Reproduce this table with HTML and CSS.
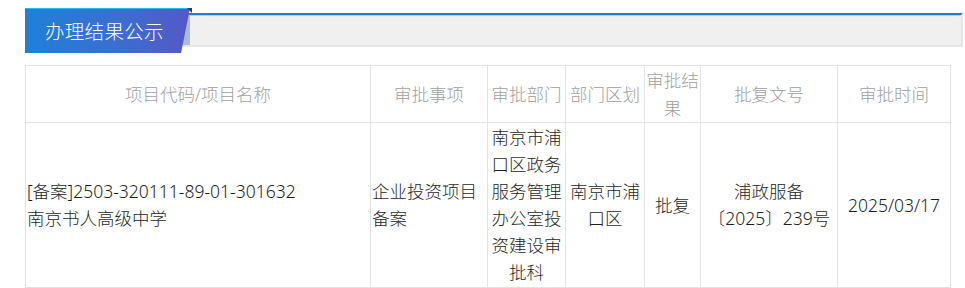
FILE: index.html
```html
<!DOCTYPE html>
<html lang="zh-CN">
<head>
<meta charset="utf-8">
<title>办理结果公示</title>
<link rel="stylesheet" href="styles.css">
</head>
<body>
<div class="page">
  <div class="title-row">
    <div class="tab"><span class="tab-text">办理结果公示</span></div>
    <div class="fold"></div>
    <div class="bar"></div>
  </div>
  <table class="result">
    <colgroup>
      <col class="c1"><col class="c2"><col class="c3"><col class="c4"><col class="c5"><col class="c6"><col class="c7">
    </colgroup>
    <thead>
      <tr>
        <th>项目代码/项目名称</th>
        <th>审批事项</th>
        <th>审批部门</th>
        <th>部门区划</th>
        <th>审批结果</th>
        <th>批复文号</th>
        <th>审批时间</th>
      </tr>
    </thead>
    <tbody>
      <tr>
        <td class="left">[备案]2503-320111-89-01-301632<br>南京书人高级中学</td>
        <td class="left">企业投资项目备案</td>
        <td>南京市浦口区政务服务管理办公室投资建设审批科</td>
        <td>南京市浦口区</td>
        <td>批复</td>
        <td>浦政服备〔2025〕239号</td>
        <td>2025/03/17</td>
      </tr>
    </tbody>
  </table>
</div>
</body>
</html>
```

FILE: styles.css
```css
html, body {
  margin: 0;
  padding: 0;
  background: #ffffff;
}

body {
  font-family: "Noto Sans", "Noto Sans CJK SC", sans-serif;
  font-weight: 300;
}

.page {
  padding: 8px 0 0 25px;
}

.title-row {
  position: relative;
  display: flex;
  align-items: flex-start;
  width: 938px;
  height: 45px;
}

.tab {
  position: relative;
  z-index: 2;
  flex: 0 0 165px;
  height: 45px;
  box-sizing: border-box;
  border-top: 1px solid #19c2ea;
  background: linear-gradient(to right, #1f80d9 0%, #3a6fd0 55%, #5558c6 100%);
  clip-path: polygon(0 0, 100% 0, 94.6% 100%, 0 100%);
  display: flex;
  align-items: center;
  padding-left: 20px;
}

.tab-text {
  color: #ffffff;
  font-family: "Noto Sans CJK SC", sans-serif;
  font-size: 19.5px;
  letter-spacing: 0.3px;
  line-height: 1;
}

.fold {
  position: absolute;
  z-index: 3;
  left: 162px;
  top: 0;
  width: 0;
  height: 0;
  border-left: 5px solid transparent;
  border-top: 5px solid #1d3f6e;
}

.bar {
  flex: 1;
  margin-left: -10px;
  margin-top: 5px;
  height: 34px;
  box-sizing: border-box;
  border-top: 2px solid #2a7bd0;
  border-right: 2px solid #e6e6e6;
  border-bottom: 2px solid #e6e6e6;
  box-shadow: inset 0 1px 0 #a9cdf0;
  background: linear-gradient(to right, #aabdd0 0, #aabdd0 10px, #f0f0f0 10px);
}

.result {
  margin-top: 12px;
  border-collapse: collapse;
  table-layout: fixed;
  width: 925px;
  font-size: 17.5px;
}

.c1 { width: 345px; }
.c2 { width: 117px; }
.c3 { width: 78px; }
.c4 { width: 79px; }
.c5 { width: 56px; }
.c6 { width: 137px; }
.c7 { width: 113px; }

.result th,
.result td {
  border: 1px solid #e3e3e3;
  text-align: center;
  vertical-align: middle;
}

.result th {
  color: #a0a0a0;
  font-weight: 300;
  line-height: 28px;
  padding: 0 1px;
  height: 56px;
}

.result td {
  color: #1f1f1f;
  line-height: 27px;
  padding: 1px 1px;
}

.result td.left {
  text-align: left;
}
```
